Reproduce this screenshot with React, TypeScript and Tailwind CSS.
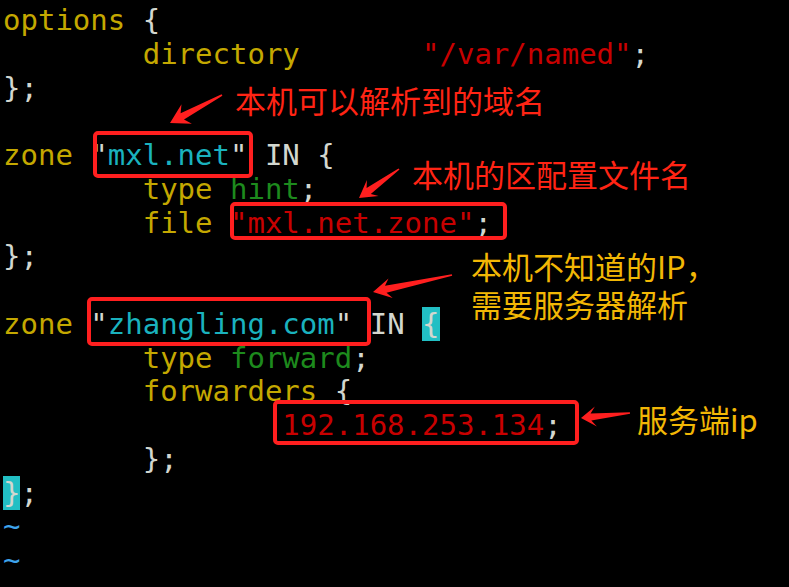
import React from "react";

type Seg = { t: string; c?: string; cursor?: boolean };

const Y = "text-[#c4a800]";
const R = "text-[#c80000]";
const C = "text-[#1ab2be]";
const G = "text-[#1d8a1d]";
const W = "text-[#d3d7cf]";
const B = "text-[#3ea3ec]";

const lines: Seg[][] = [
  [{ t: "options", c: Y }, { t: " {", c: W }],
  [{ t: "        directory", c: Y }, { t: '       "/var/named"', c: R }, { t: ";", c: W }],
  [{ t: "};", c: W }],
  [],
  [{ t: "zone", c: Y }, { t: ' "', c: W }, { t: "mxl.net", c: C }, { t: '" IN {', c: W }],
  [{ t: "        type", c: Y }, { t: " hint", c: G }, { t: ";", c: W }],
  [{ t: "        file", c: Y }, { t: ' "mxl.net.zone"', c: R }, { t: ";", c: W }],
  [{ t: "};", c: W }],
  [],
  [
    { t: "zone", c: Y },
    { t: ' "', c: W },
    { t: "zhangling.com", c: C },
    { t: '" IN ', c: W },
    { t: "{", c: W, cursor: true },
  ],
  [{ t: "        type", c: Y }, { t: " forward", c: G }, { t: ";", c: W }],
  [{ t: "        forwarders", c: Y }, { t: " {", c: W }],
  [{ t: "                192.168.253.134", c: R }, { t: ";", c: W }],
  [{ t: "        };", c: W }],
  [{ t: "}", c: W, cursor: true }, { t: ";", c: W }],
  [{ t: "~", c: B }],
  [{ t: "~", c: B }],
];

// tapered arrow polygon from tail to tip
function arrow(tx: number, ty: number, px: number, py: number, h: number, hw: number) {
  const dx = px - tx;
  const dy = py - ty;
  const len = Math.hypot(dx, dy);
  const ux = dx / len;
  const uy = dy / len;
  const nx = -uy;
  const ny = ux;
  const bx = px - ux * h;
  const by = py - uy * h;
  const jx = px - ux * (h - 5);
  const jy = py - uy * (h - 5);
  const pts = [
    [tx + nx * 0.8, ty + ny * 0.8],
    [jx + nx * 3.6, jy + ny * 3.6],
    [bx + nx * hw, by + ny * hw],
    [px, py],
    [bx - nx * hw, by - ny * hw],
    [jx - nx * 3.6, jy - ny * 3.6],
    [tx - nx * 0.8, ty - ny * 0.8],
  ];
  return pts.map((p) => p.map((v) => v.toFixed(1)).join(",")).join(" ");
}

const App = () => {
  return (
    <main className="relative w-[789px] h-[587px] bg-black overflow-hidden">
      <section
        className="pt-[4px] pl-[3px] text-[29px] leading-[33.75px] whitespace-pre"
        style={{ fontFamily: '"DejaVu Sans Mono", "Liberation Mono", monospace' }}
      >
        {lines.map((segs, i) => (
          <div key={i} className="h-[33.75px]">
            {segs.map((s, j) => (
              <span key={j} className={`${s.c} ${s.cursor ? "bg-[#22bfc4]" : ""}`}>
                {s.t}
              </span>
            ))}
          </div>
        ))}
      </section>

      {/* red boxes */}
      <div className="absolute left-[93px] top-[131px] w-[160px] h-[47px] border-4 border-[#ff1f1f] rounded-[5px]" />
      <div className="absolute left-[230px] top-[202px] w-[277px] h-[38px] border-4 border-[#ff1f1f] rounded-[5px]" />
      <div className="absolute left-[87px] top-[297px] w-[284px] h-[49px] border-4 border-[#ff1f1f] rounded-[5px]" />
      <div className="absolute left-[273px] top-[400px] w-[306px] h-[45px] border-4 border-[#ff1f1f] rounded-[5px]" />

      <svg className="absolute inset-0" width="789" height="587">
        <polygon points={arrow(222, 95, 170, 123, 19, 11)} fill="#ff1f1f" />
        <polygon points={arrow(399, 169, 359, 198, 17, 10)} fill="#ff1f1f" />
        <polygon points={arrow(452, 275, 373, 292, 18, 10)} fill="#ff1f1f" />
        <polygon points={arrow(630, 413, 581, 418, 15, 10)} fill="#ff1f1f" />
      </svg>

      <div
        className="absolute inset-0 text-[31px] leading-none"
        style={{ fontFamily: '"Noto Sans CJK SC", "Noto Sans", sans-serif' }}
      >
        <p className="absolute left-[235px] top-[84px] text-[#ff2414]">本机可以解析到的域名</p>
        <p className="absolute left-[412px] top-[158px] text-[#ff2414]">本机的区配置文件名</p>
        <div className="absolute left-[471px] top-[247px] leading-[38px] text-[#f2b705]">
          <p>本机不知道的IP，</p>
          <p>需要服务器解析</p>
        </div>
        <p className="absolute left-[637px] top-[403px] text-[#f2b705]">服务端ip</p>
      </div>
    </main>
  );
};

export default App;
